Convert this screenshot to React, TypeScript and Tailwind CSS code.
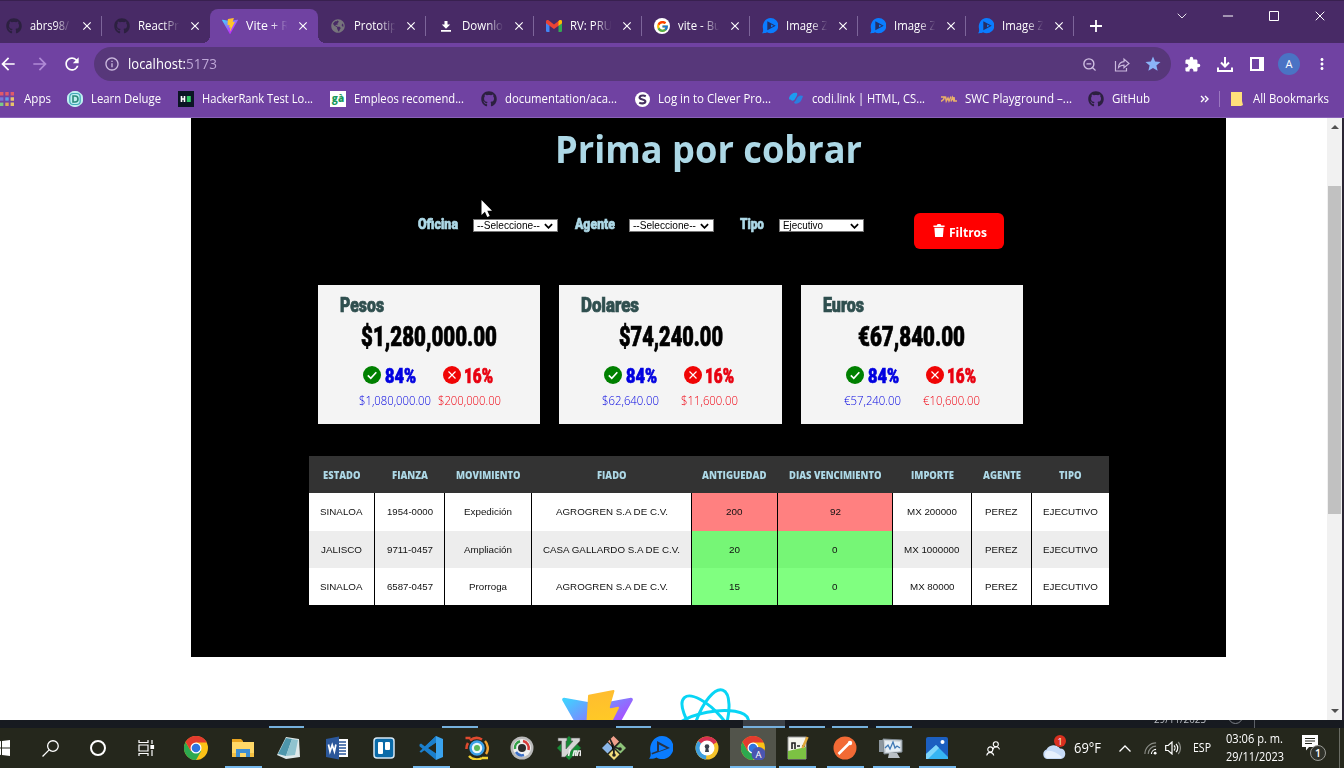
import { useLayoutEffect, useRef, useState } from "react";
import type { ReactNode } from "react";
import { FaGithub, FaGlobeAmericas } from "react-icons/fa";
import { FcGoogle } from "react-icons/fc";
import { MdArrowBack, MdArrowForward, MdRefresh, MdInfoOutline, MdStar, MdClose, MdAdd, MdMoreVert, MdExtension } from "react-icons/md";
import { ChevronDown, ChevronUp, Minus, Square, X, ZoomOut } from "lucide-react";

const UI = "font-['Open_Sans','Noto_Sans',sans-serif]";
const HEAVY = "font-['Roboto',sans-serif] font-black [-webkit-text-stroke:0.7px_currentColor]";

/* One line of text condensed or widened to an exact advance width. */
function Fit({ w, className = "", children }: { w: number; className?: string; children: ReactNode }) {
  const ref = useRef<HTMLSpanElement>(null);
  const [k, setK] = useState(1);
  useLayoutEffect(() => {
    if (ref.current) setK(w / ref.current.getBoundingClientRect().width);
  }, [w]);
  return (
    <span className={`block shrink-0 whitespace-nowrap ${className}`} style={{ width: w }}>
      <span ref={ref} className="inline-block origin-left whitespace-pre" style={{ transform: `scaleX(${k})` }}>
        {children}
      </span>
    </span>
  );
}

function ViteLogo({ className }: { className: string }) {
  return (
    <svg viewBox="0 0 256 257" className={className}>
      <defs>
        <linearGradient id="va" x1="-.8%" x2="57.6%" y1="7.7%" y2="78.4%">
          <stop offset="0%" stopColor="#41D1FF" />
          <stop offset="100%" stopColor="#BD34FE" />
        </linearGradient>
        <linearGradient id="vb" x1="43.4%" x2="50.3%" y1="2.2%" y2="89%">
          <stop offset="0%" stopColor="#FFBD2F" />
          <stop offset="100%" stopColor="#FFD21F" />
        </linearGradient>
      </defs>
      <path fill="url(#va)" d="M255.153 37.938L134.897 252.976c-2.483 4.44-8.862 4.466-11.382.048L.875 37.958c-2.746-4.814 1.371-10.646 6.827-9.67l120.385 21.517a6.537 6.537 0 0 0 2.322-.004l117.867-21.483c5.438-.991 9.574 4.796 6.877 9.62Z" />
      <path fill="url(#vb)" d="M185.432.063L96.44 17.501a3.268 3.268 0 0 0-2.634 3.014l-5.474 92.456a3.268 3.268 0 0 0 3.997 3.378l24.777-5.718c2.318-.535 4.413 1.507 3.936 3.838l-7.361 36.047c-.495 2.426 1.782 4.5 4.151 3.78l15.304-4.649c2.372-.72 4.652 1.36 4.15 3.788l-11.698 56.621c-.732 3.542 3.979 5.473 5.943 2.437l1.313-2.028l72.516-144.72c1.215-2.423-.88-5.186-3.54-4.672l-25.505 4.922c-2.396.462-4.435-1.77-3.759-4.114l16.646-57.705c.677-2.35-1.37-4.583-3.769-4.113Z" />
    </svg>
  );
}

function PlayLogo({ className }: { className: string }) {
  return (
    <svg viewBox="0 0 24 24" className={className}>
      <path fill="#0a7cff" d="M13 0a11 11 0 1 1 0 23c-2 0-4-.6-5.500-1.600C6 22.500 3 23 0 22.700c1.500-1.500 2-3.500 1.500-6.500C.6 12.500 1.500 8 3.500 5.200 5.500 2 9 0 13 0z" />
      <path fill="#252f66" d="M8 5l12.500 6.700L8 18.500z" />
      <path fill="#0a7cff" d="M13.500 9.700l4 2.100-4 2.200z" />
    </svg>
  );
}

function Gmail() {
  return (
    <svg viewBox="0 0 16 12" className="h-[12px] w-[16px]">
      <path fill="#4285f4" d="M0 2h3.500v10H1.200A1.200 1.200 0 0 1 0 10.800z" />
      <path fill="#34a853" d="M12.500 2H16v8.800a1.200 1.200 0 0 1-1.200 1.200h-2.300z" />
      <path fill="#ea4335" d="M0 1.500C0 0 1.800-.4 2.800.5L8 4.500 13.200.5c1-.9 2.800-.5 2.800 1v1.700L8 9 0 3.200z" />
      <path fill="#fbbc04" d="M12.500 1l.7-.5c1-.9 2.800-.5 2.800 1v1.700l-3.500 2.600z" />
    </svg>
  );
}

function DownloadGlyph({ className }: { className: string }) {
  return (
    <svg viewBox="0 0 16 16" className={className} fill="none" stroke="white" strokeWidth="2">
      <path d="M8 1v9M4 6.500l4 4 4-4M1 11.500V15h14v-3.500" />
    </svg>
  );
}

type TabData = { icon: ReactNode; text: string; w: number; active?: boolean; line?: boolean };
const octo = <FaGithub className="size-4 text-[#2c2040]" />;
const tabs: TabData[] = [
  { icon: octo, text: "abrs98/", w: 39, line: true },
  { icon: octo, text: "ReactPr", w: 41 },
  { icon: <ViteLogo className="size-4" />, text: "Vite + R", w: 43, active: true },
  { icon: <FaGlobeAmericas className="size-[14px] text-[#77747c]" />, text: "Prototip", w: 43, line: true },
  { icon: <svg viewBox="0 0 16 16" className="size-4"><path fill="#fff" d="M6.500 3h3v3.500h2.700L8 10.700 3.800 6.500h2.700zM3 12h10v1.700H3z" /></svg>, text: "Downlo", w: 41, line: true },
  { icon: <Gmail />, text: "RV: PRU", w: 42, line: true },
  { icon: <span className="flex size-4 items-center justify-center rounded-full bg-white"><FcGoogle className="size-[13px]" /></span>, text: "vite - Bu", w: 43, line: true },
  { icon: <PlayLogo className="size-4" />, text: "Image Z", w: 42, line: true },
  { icon: <PlayLogo className="size-4" />, text: "Image Z", w: 42, line: true },
  { icon: <PlayLogo className="size-4" />, text: "Image Z", w: 42, line: true },
];

function TabStrip() {
  return (
    <div className="flex h-[43px] shrink-0 border-t border-[#38204f] bg-[#482a66]">
      <div className="-ml-[6px] flex">
        {tabs.map((t, i) => (
          <div key={i} className={`relative mt-2 flex h-[34px] w-[108px] items-center rounded-t-lg pl-[12px] ${t.active ? "bg-[#7042a2]" : ""}`}>
            {t.active && (
              <>
                <span className="absolute bottom-0 -left-2 size-2 bg-[radial-gradient(circle_at_0_0,transparent_8px,#7042a2_8px)]" />
                <span className="absolute -right-2 bottom-0 size-2 bg-[radial-gradient(circle_at_100%_0,transparent_8px,#7042a2_8px)]" />
              </>
            )}
            <span className="flex w-4 justify-center">{t.icon}</span>
            <div className="ml-[8px] w-[45px] [mask-image:linear-gradient(to_right,black_55%,transparent_92%)]">
              <Fit w={t.w} className="text-[12px] leading-5 font-medium text-white">{t.text}</Fit>
            </div>
            <MdClose className="ml-[5px] size-[14px] text-white" />
            {t.line && <span className="absolute top-[7px] right-0 h-5 w-px bg-[#7d659a]" />}
          </div>
        ))}
      </div>
      <svg viewBox="0 0 12 12" className="mt-[19px] ml-[16px] size-[12px]" stroke="#fff" strokeWidth="1.800"><path d="M6 0v12M0 6h12" /></svg>
      <div className="mr-[16px] ml-auto flex items-start gap-[30px] pt-[7px] text-white">
        <ChevronDown className="size-4" strokeWidth={1.300} />
        <Minus className="size-4" strokeWidth={1.500} />
        <svg viewBox="0 0 12 12" className="mx-[2px] mt-[2px] size-[12px]" fill="none" stroke="#fff"><path d="M1.500 1.500h9v9h-9z" /></svg>
        <X className="size-4" strokeWidth={1.500} />
      </div>
    </div>
  );
}

function Toolbar() {
  return (
    <div className="flex h-[42px] shrink-0 items-center bg-[#7042a2] text-white">
      <MdArrowBack className="-ml-[2px] size-5" />
      <MdArrowForward className="ml-[12px] size-5 text-[#b08ad6]" />
      <MdRefresh className="ml-[12px] size-5" />
      <div className="ml-[12px] flex h-[34px] w-[1077px] items-center rounded-full bg-[#57377a] pl-[10px]">
        <MdInfoOutline className="size-4 text-[#cbb9de]" />
        <Fit w={58} className="ml-[8px] text-[14px] leading-5">localhost:</Fit>
        <Fit w={31} className="text-[14px] leading-5 text-[#bda6d6]">5173</Fit>
        <div className="mr-[9px] ml-auto flex items-center">
          <ZoomOut className="size-[15px] text-[#d0c0e2]" strokeWidth={2.200} />
          <svg viewBox="0 0 16 16" className="ml-[17px] size-[16px]" fill="none" stroke="#cbb9de" strokeWidth="1.200">
            <path d="M1.500 5v10h11v-3M4.500 11.500c.3-4 2-5.700 5.500-5.900V3l5 4.500-5 4.300V9.200c-2.500 0-4.300.8-5.500 2.300z" />
          </svg>
          <MdStar className="ml-[14px] size-[18px] text-[#8ab4f8]" />
        </div>
      </div>
      <MdExtension className="ml-[13px] size-[17px]" />
      <DownloadGlyph className="ml-[16px] size-[16px]" />
      <svg viewBox="0 0 14 14" className="ml-[17px] size-[14px]"><path fill="none" stroke="#fff" strokeWidth="2" d="M1 1h12v12H1z" /><path fill="#fff" d="M9 0h5v14H9z" /></svg>
      <span className="ml-[14px] flex size-[22px] items-center justify-center rounded-full bg-[#4a73c4] text-[11px]">A</span>
      <MdMoreVert className="ml-[13px] size-[18px]" />
    </div>
  );
}

type Mark = { icon: ReactNode; text: string; w: number; gap: string; pad: string };
const marks: Mark[] = [
  {
    icon: (
      <svg viewBox="0 0 14 14" className="h-[14px] w-[14px]">
        <path fill="#e05a6a" d="M0 0h3.400v3.400H0zM5.300 0h3.400v3.400H5.300zM10.600 0H14v3.400h-3.400z" />
        <path fill="#7c74d8" d="M0 5.300h3.400v3.400H0z" /><path fill="#5f9be8" d="M5.300 5.300h3.400v3.400H5.300z" /><path fill="#e8c46a" d="M10.600 5.300H14v3.400h-3.400zM10.600 10.600H14V14h-3.400z" />
        <path fill="#7ac98a" d="M0 10.600h3.400V14H0z" /><path fill="#e0a55a" d="M5.300 10.600h3.400V14H5.300z" />
      </svg>
    ), text: "Apps", w: 27, gap: "", pad: "ml-[10px]",
  },
  {
    icon: (
      <svg viewBox="0 0 16 16" className="size-4"><rect x="0" y="1.500" width="16" height="13" rx="5" fill="#bfeef0" /><rect x="2" y="0" width="12" height="16" rx="5" fill="#bfeef0" /><rect x="2.800" y="2.500" width="10.400" height="11" rx="3.500" fill="none" stroke="#3fa9b8" strokeWidth="1.200" /><path d="M6 5h2a3 3 0 0 1 0 6H6z" fill="none" stroke="#2a8b7a" strokeWidth="1.600" /></svg>
    ), text: "Learn Deluge", w: 70, gap: "ml-[16px]", pad: "ml-[8px]",
  },
  {
    icon: <svg viewBox="0 0 16 16" className="size-4"><path fill="#0b1524" d="M0 0h16v16H0z" /><path stroke="#fff" strokeWidth="1.600" d="M3.500 5v6M6.500 5v6M3.500 8h3" /><path fill="#2ec866" d="M8.800 5h4v6h-4z" /></svg>,
    text: "HackerRank Test Lo...", w: 111, gap: "ml-[17px]", pad: "ml-[8px]",
  },
  {
    icon: <span className="flex size-4 items-center justify-center bg-white pb-[2px] text-[10px] leading-none font-extrabold text-[#1a9a5c]">gà</span>,
    text: "Empleos recomend...", w: 110, gap: "ml-[17px]", pad: "ml-[8px]",
  },
  { icon: octo, text: "documentation/aca...", w: 112, gap: "ml-[17px]", pad: "ml-[8px]" },
  {
    icon: <svg viewBox="0 0 16 16" className="size-[15px]"><circle cx="8" cy="8" r="8" fill="#fff" /><path fill="none" stroke="#453060" strokeWidth="2.300" d="M11.500 4.500C8 2.800 4 4.500 5 6.500s5.500 1 6 3.200-3.500 3.300-6.500 1.600" /></svg>,
    text: "Log in to Clever Pro...", w: 113, gap: "ml-[18px]", pad: "ml-[8px]",
  },
  {
    icon: <svg viewBox="0 0 16 16" className="size-4"><path fill="#1c9cf0" d="M1 7c1-4 5-6 8-5 1 2-1 4-2 6s-3 2-4 1-2 0-2-2z" /><path fill="#2a7fe0" d="M8 9c2-5 5-5 7-4-1 3-2 6-4.500 7S7 13 6 11.500z" /></svg>,
    text: "codi.link | HTML, CS...", w: 113, gap: "ml-[17px]", pad: "ml-[8px]",
  },
  {
    icon: <svg viewBox="0 0 16 16" className="size-4"><path fill="none" stroke="#e9b06a" strokeWidth="1.500" d="M0 6h3.500l-1 2.500L0 10.500M4.500 5.500l.8 4.500 1.700-3 1 3 2-4.500M10 10.500l1.500-4 1.500 4M13 6l.5 4H16" /></svg>,
    text: "SWC Playground –...", w: 107, gap: "ml-[16px]", pad: "ml-[8px]",
  },
  { icon: octo, text: "GitHub", w: 38, gap: "ml-[16px]", pad: "ml-[8px]" },
];

function Bookmarks() {
  return (
    <div className="flex h-[33px] shrink-0 items-center border-b border-[#8a62b8] bg-[#7042a2] pb-[4px] text-[12px] leading-5 text-white">
      {marks.map((m, i) => (
        <div key={i} className={`flex items-center ${m.gap}`}>
          {m.icon}
          <Fit w={m.w} className={m.pad}>{m.text}</Fit>
        </div>
      ))}
      <svg viewBox="0 0 9 8" className="ml-auto h-[8px] w-[9px]" fill="none" stroke="#fff" strokeWidth="1.400"><path d="M1 1l3 3-3 3M5 1l3 3-3 3" /></svg>
      <span className="ml-[10px] h-4 w-px bg-[#9b78c0]" />
      <svg viewBox="0 0 12 14" className="ml-[11px] h-[14px] w-[12px]"><path fill="#ffe07a" d="M0 0h11v9l1 4-2 1H0z" /></svg>
      <Fit w={76} className="mr-[15px] ml-[10px]">All Bookmarks</Fit>
    </div>
  );
}

function Select({ value, w, className }: { value: string; w: number; className: string }) {
  return (
    <div className={`mt-[6px] flex h-[13px] w-[85px] items-center border border-[#767676] bg-white pl-[3px] ${className}`}>
      <Fit w={w} className="font-['Liberation_Sans',sans-serif] text-[10px] leading-[12px] text-black">{value}</Fit>
      <svg viewBox="0 0 10 6" className="mr-[4px] ml-auto h-[6px] w-[9px]" fill="none" stroke="#000" strokeWidth="2"><path d="M1 1l4 4 4-4" /></svg>
    </div>
  );
}

function FilterLabel({ w, className, children }: { w: number; className: string; children: string }) {
  return <Fit w={w} className={`${HEAVY} text-[15.500px] leading-[22px] text-[#add8e6] ${className}`}>{children}</Fit>;
}

function Filters() {
  return (
    <div className="flex h-[109px] items-start pt-[37px] pl-[227px]">
      <FilterLabel w={40} className="">Oficina</FilterLabel>
      <Select value="--Seleccione--" w={63} className="ml-[15px]" />
      <FilterLabel w={40} className="ml-[17px]">Agente</FilterLabel>
      <Select value="--Seleccione--" w={63} className="ml-[14px]" />
      <FilterLabel w={24} className="ml-[26px]">Tipo</FilterLabel>
      <Select value="Ejecutivo" w={40} className="ml-[15px]" />
      <div className="ml-[50px] flex h-[36px] w-[90px] items-center rounded-[6px] bg-[#ff0000] pl-[19px] text-white">
        <svg viewBox="0 0 12 14" className="mb-[2px] h-[13px] w-[12px]" fill="#fff"><path d="M0 1.500h3.500L4.500 0h3l1 1.500H12v1.700H0zM1 4h10l-.8 10H1.800z" /></svg>
        <Fit w={38} className="ml-[4px] pt-px text-[13px] leading-5 font-bold">Filtros</Fit>
      </div>
    </div>
  );
}

type CardData = { name: string; nameW: number; total: string; totalW: number; ok: string; okW: number; bad: string; badW: number; pad: string; gap: string };
const cards: CardData[] = [
  { name: "Pesos", nameW: 44, total: "$1,280,000.00", totalW: 136, ok: "$1,080,000.00", okW: 72, bad: "$200,000.00", badW: 63, pad: "pl-[41px]", gap: "ml-[7px]" },
  { name: "Dolares", nameW: 58, total: "$74,240.00", totalW: 104, ok: "$62,640.00", okW: 57, bad: "$11,600.00", badW: 57, pad: "pl-[43px]", gap: "ml-[22px]" },
  { name: "Euros", nameW: 41, total: "€67,840.00", totalW: 107, ok: "€57,240.00", okW: 57, bad: "€10,600.00", badW: 57, pad: "pl-[43px]", gap: "ml-[22px]" },
];

function Badge({ ok }: { ok: boolean }) {
  return (
    <svg viewBox="0 0 18 18" className="-mt-[5px] size-[18px]">
      <circle cx="9" cy="9" r="9" fill={ok ? "#008000" : "#f00505"} />
      <path d={ok ? "M4.800 9.300l3 3 5.500-6" : "M5.500 5.500l7 7M12.500 5.500l-7 7"} fill="none" stroke="#fff" strokeWidth={ok ? 1.700 : 1.200} />
    </svg>
  );
}

function Card({ c }: { c: CardData }) {
  return (
    <div className="h-[139px] w-[222.400px] bg-[#f4f4f4]">
      <Fit w={c.nameW} className={`${HEAVY} ml-[22px] pt-[8px] text-[20px] leading-[24px] text-[#2f4f4f]`}>{c.name}</Fit>
      <div className="flex h-[40px] items-center justify-center">
        <Fit w={c.totalW} className={`${HEAVY} text-[27px] leading-[32px] text-black`}>{c.total}</Fit>
      </div>
      <div className="mt-[8px] flex h-[24px] items-center pl-[45px]">
        <Badge ok />
        <Fit w={31} className={`${HEAVY} ml-[4px] text-[19.500px] leading-6 text-[#0000e0]`}>84%</Fit>
        <span className="w-[27px]" />
        <Badge ok={false} />
        <Fit w={29} className={`${HEAVY} ml-[3px] text-[19.500px] leading-6 text-[#e80010]`}>16%</Fit>
      </div>
      <div className={`mt-[2px] flex text-[12.500px] leading-[20px] font-[350] ${c.pad}`}>
        <Fit w={c.okW} className="text-[#0000e0]">{c.ok}</Fit>
        <Fit w={c.badW} className={`text-[#f00010] ${c.gap}`}>{c.bad}</Fit>
      </div>
    </div>
  );
}

const cols = "grid grid-cols-[66px_70px_87px_160px_86px_115px_79px_60px_77px]";
const heads: [string, number][] = [["ESTADO", 37.500], ["FIANZA", 36], ["MOVIMIENTO", 64.500], ["FIADO", 29.500], ["ANTIGUEDAD", 64.500], ["DIAS VENCIMIENTO", 92.500], ["IMPORTE", 43], ["AGENTE", 38], ["TIPO", 22.500]];
const rows: [string, number][][] = [
  [["SINALOA", 42.500], ["1954-0000", 46], ["Expedición", 48], ["AGROGREN S.A DE C.V.", 112], ["200", 16.500], ["92", 11], ["MX 200000", 50], ["PEREZ", 32.500], ["EJECUTIVO", 55]],
  [["JALISCO", 41], ["9711-0457", 46], ["Ampliación", 48], ["CASA GALLARDO S.A DE C.V.", 137], ["20", 11], ["0", 5.500], ["MX 1000000", 55.500], ["PEREZ", 32.500], ["EJECUTIVO", 55]],
  [["SINALOA", 42.500], ["6587-0457", 46], ["Prorroga", 38], ["AGROGREN S.A DE C.V.", 112], ["15", 11], ["0", 5.500], ["MX 80000", 44.500], ["PEREZ", 32.500], ["EJECUTIVO", 55]],
];
const rowBg = ["h-[38px] bg-white", "h-[37px] bg-[#ededed]", "h-[37px] bg-white"];
const flagBg = ["bg-[#ff8080]", "bg-[#76f676]", "bg-[#80ff80]"];

function Table() {
  return (
    <div className="mt-[32px] ml-[118px] w-[800px]">
      <div className={`${cols} h-[37px] bg-[#333333] text-[9.600px] leading-4 font-extrabold text-[#add8e6]`}>
        {heads.map(([t, w]) => (
          <div key={t} className="flex items-center justify-center pt-[2px] pr-px"><Fit w={w}>{t}</Fit></div>
        ))}
      </div>
      {rows.map((r, i) => (
        <div key={i} className={`${cols} ${rowBg[i]} font-['Liberation_Sans',sans-serif] text-[9.600px] leading-4 text-[#111]`}>
          {r.map(([t, w], j) => (
            <div key={j} className={`flex items-center justify-center ${j < 8 ? "border-r border-black" : ""} ${j === 4 || j === 5 ? flagBg[i] : ""}`}>
              <Fit w={w}>{t}</Fit>
            </div>
          ))}
        </div>
      ))}
    </div>
  );
}

function ReactLogo() {
  return (
    <svg viewBox="-42 -42 84 84" className="-mt-[5px] size-[84px]" fill="none" stroke="#08d5f5" strokeWidth="3">
      <g transform="rotate(-11)">
        <ellipse rx="39" ry="15" />
        <ellipse rx="39" ry="15" transform="rotate(60)" />
        <ellipse rx="39" ry="15" transform="rotate(120)" />
      </g>
      <circle r="7.500" fill="#08d5f5" stroke="none" />
    </svg>
  );
}

function Page() {
  return (
    <div className="flex h-[602px] shrink-0 overflow-hidden bg-white">
      <div className="relative w-[1327px] pl-[191px]">
        <main className="h-[539px] w-[1035px] bg-black">
          <h1 className="flex h-[58px] items-center justify-center pt-[2px] text-[38px] leading-[58px] font-bold text-[#add8e6]">
            <Fit w={307}>Prima por cobrar</Fit>
          </h1>
          <Filters />
          <div className="flex gap-[19px] pl-[127px]">
            {cards.map((c) => <Card key={c.name} c={c} />)}
          </div>
          <Table />
        </main>
        <div className="flex h-[63px] items-start overflow-hidden pt-[33px] pl-[371px]">
          <ViteLogo className="size-[71px] shrink-0" />
          <div className="ml-[35px] shrink-0"><ReactLogo /></div>
        </div>
        <svg viewBox="0 0 12 19" className="absolute top-[82px] left-[481px] h-[19px] w-[12px]"><path fill="#fff" d="M.5 0v15l3.400-3.200L6.300 17l2.400-1-2.400-5.200H11z" /></svg>
      </div>
      <div className="flex w-[15px] flex-col items-center bg-[#f1f1f1] py-[7px]">
        <svg viewBox="0 0 8 4" className="h-[4px] w-[8px]"><path fill="#505050" d="M0 4l4-4 4 4z" /></svg>
        <div className="mt-[57px] h-[328px] w-[13px] bg-[#c1c1c1]" />
        <svg viewBox="0 0 8 4" className="mt-auto h-[4px] w-[8px]"><path fill="#505050" d="M0 0l4 4 4-4z" /></svg>
      </div>
      <div className="w-[2px] bg-[#2a2433]" />
    </div>
  );
}

function Chrome() {
  return (
    <>
      <circle cx="12" cy="12" r="12" fill="#fbc116" />
      <path fill="#2da94f" d="M1.600 6A12 12 0 0 0 12 24l5.200-9L12 12 6.800 15z" />
      <path fill="#e33b2e" d="M12 6.500h10.700A12 12 0 0 0 1.600 6l5.200 9z" />
      <circle cx="12" cy="12" r="5.500" fill="#fff" />
      <circle cx="12" cy="12" r="4.300" fill="#2f74e0" />
    </>
  );
}

type AppData = { art: ReactNode; shift: string; mark?: boolean; active?: boolean };
const apps: AppData[] = [
  { shift: "", mark: true, art: <><path fill="#e8a420" d="M1 3h9l2 2v4H1z" /><path fill="#ffd867" d="M1 6h22v15H1z" /><path fill="#3f8fd2" d="M5 21v-8h14v8h-4v-4H9v4z" /><path fill="#f4c041" d="M1 17h4v4H1zM19 17h4v4h-4z" /></> },
  { shift: "", art: <><path fill="#dfe9ea" d="M9 1l13 2 1 18-14 2-9-4z" /><path fill="#4d96ab" d="M9 2l6 1-6 17-8-2z" /><path fill="#8fc3cf" d="M15 3l6 1-3 15-9 1z" /></> },
  { shift: "ml-0.5", art: <><path fill="#fff" d="M12 3h11v18H12z" /><path stroke="#2b579a" strokeWidth="1.500" d="M14 6h7M14 9h7M14 12h7M14 15h7M14 18h7" /><path fill="#2b579a" d="M1 3l13-2.500v23L1 21z" /><path fill="none" stroke="#fff" strokeWidth="1.700" d="M3.500 8.500l1.500 7 2.200-6.500 2.200 6.500 1.500-7" /></> },
  { shift: "ml-px", art: <><rect x="2" y="2" width="20" height="20" rx="3" fill="#0a6aa8" stroke="#d8e8f4" strokeWidth="1.500" /><rect x="6" y="6" width="5" height="12" rx="1" fill="#fff" /><rect x="13" y="6" width="5" height="8" rx="1" fill="#fff" /></> },
  { shift: "ml-px", mark: true, art: <><path fill="#1b7fcc" d="M17 0L6 10.500 2 7.500.5 8.500v1.700L17 24l1-6-9-6 9-6z" /><path fill="#1b7fcc" d="M.5 15.500L2 16.700 17 6V0z" /><path fill="#3aa3ee" d="M17 0l7 3v18l-7 3z" /></> },
  { shift: "", art: <><circle cx="12" cy="12" r="6.500" fill="#eaf6fb" stroke="#3aa0e8" strokeWidth="2.500" /><circle cx="12" cy="12" r="3" fill="#5bb85b" /><path fill="none" stroke="#e04a2f" strokeWidth="2.500" d="M5 4.500a10.500 10.500 0 0 1 12-1M1.500 13A10 10 0 0 1 3 7M.5 2h5" /><path fill="none" stroke="#f2a230" strokeWidth="2.500" d="M20 5a10.500 10.500 0 0 1 1 13" /><path fill="none" stroke="#f2d230" strokeWidth="2.500" d="M4 20a10.500 10.500 0 0 0 13 2M17 22h6" /></> },
  { shift: "-ml-px", art: <><circle cx="12" cy="12" r="11.500" fill="#b9b9b9" /><circle cx="12" cy="12" r="9" fill="#efefef" /><path fill="none" stroke="#3c70c8" strokeWidth="2.500" d="M6 16a7 7 0 0 0 8 3" /><path fill="none" stroke="#2f9e44" strokeWidth="2.500" d="M5 13a7 7 0 0 1 5-7.700" /><path fill="none" stroke="#d83a3a" strokeWidth="2.500" d="M13 5.100A7 7 0 0 1 18.500 14" /><circle cx="12" cy="12" r="4" fill="#2c2c2c" /></> },
  { shift: "ml-px", art: <><path fill="#168a35" d="M12 0l12 12-12 12L0 12z" /><path fill="#d5d5d5" stroke="#555" strokeWidth=".6" d="M1 2h9v3H9v8l7-8h-2V2h9v3L8 21H4.500V5H1z" /><path fill="none" stroke="#eee" strokeWidth="1.600" d="M13 13l-1.500 7M16 20l1.300-5h2l-1 5M20 20l1.300-5H24l-1 5" /></> },
  { shift: "-ml-px", mark: true, art: <><path fill="#f0a08c" d="M11.500 0l5.500 5.500-5.500 5.500L6 5.500z" /><path fill="#8bb6e8" d="M5.500 6.500L11 12l-5.500 5.500L0 12z" /><path fill="#8ec47a" d="M18.500 6.500L24 12l-5.500 5.500L13 12z" /><path fill="#f2dc7a" d="M12 13l5.500 5.500L12 24l-5.500-5.500z" /><path stroke="#222" strokeWidth="1.600" d="M8 3l4 8v9M12 11l6 2" /><circle cx="12" cy="19" r="1.800" fill="#222" /><circle cx="18" cy="13" r="1.800" fill="#222" /></> },
  { shift: "ml-px", art: <><path fill="#0a7cff" d="M13 0a11 11 0 1 1 0 23c-2 0-4-.6-5.500-1.600C6 22.500 3 23 0 22.700c1.500-1.500 2-3.500 1.500-6.500C.6 12.500 1.500 8 3.500 5.200 5.500 2 9 0 13 0z" /><path fill="#263347" d="M8 5l13 7L3 18.500l-.5-1.500L8 15z" /><path fill="#0a7cff" d="M10 8.500l7.500 3.800-7.500 3z" /></> },
  { shift: "", art: <><circle cx="12" cy="12" r="11.500" fill="#f4c22a" /><path fill="#d83050" d="M12 12L3 5a11.500 11.500 0 0 1 19 1z" /><path fill="#3e9fe0" d="M12 12L3 5a11.500 11.500 0 0 0 8 18.500z" /><circle cx="12" cy="12" r="7.500" fill="#fff" /><circle cx="12" cy="10.500" r="2.300" fill="#39414e" /><path fill="#39414e" d="M11 11h2l1 5h-4z" /></> },
  { shift: "", mark: true, active: true, art: <><Chrome /><circle cx="17.500" cy="18" r="7" fill="#4a55b0" /><text x="17.500" y="21.500" textAnchor="middle" fontSize="9.500" fill="#fff">A</text></> },
  { shift: "-ml-0.5", mark: true, art: <><path fill="#f5f5ee" stroke="#999" d="M3 1h18v22H3z" /><path fill="#7cc243" d="M3 15l18-4v12H3z" /><path fill="none" stroke="#222" strokeWidth="1.600" d="M7 13V7h3v6M12 10h3M17 10h3" /><path stroke="#e0a83a" strokeWidth="2.500" d="M22.500 1l-5 11" /></> },
  { shift: "ml-0.5", mark: true, art: <><circle cx="12" cy="12" r="11.500" fill="#f26a35" /><path stroke="#fff" strokeWidth="2.500" d="M5.500 18l6-6M11 12.500l5-5" /><circle cx="17" cy="7" r="2.200" fill="#fff" /></> },
  { shift: "", mark: true, art: <><path fill="#8d979f" d="M0 4h9v12H0z" /><path fill="#cfd6db" stroke="#7f8a92" d="M4 3l19 1v12L5 18z" /><path fill="#e7eff5" d="M6 5l15 1v9L7 16z" /><path fill="none" stroke="#3f79b5" strokeWidth="1.300" d="M6 12l3-3 2 4 3-7 2 6 2-2 3 2" /><path fill="#b9c0c5" d="M10 17h8l3 5H9z" /></> },
  { shift: "", mark: true, art: <><rect x="1" y="1" width="22" height="22" rx="2" fill="#1c5fc0" /><path fill="#36b5f2" d="M1 18l10-9 12 12v2H1z" /><path fill="#7fd5fa" d="M1 18l10-9 3 3L3 23H1z" /><circle cx="17.500" cy="6" r="2" fill="#fff" /></> },
];

function Taskbar() {
  return (
    <div className="flex h-[48px] shrink-0 flex-col bg-[#25271c] text-white">
      <div className="flex h-[8px] shrink-0 items-end overflow-hidden bg-[#171a20]">
        <span className="ml-[269px] h-[2px] w-[35px] bg-[#76b0de]" />
        <span className="ml-[138px] h-[2px] w-[36px] bg-[#76b0de]" />
        <span className="ml-[138px] h-[2px] w-[35px] bg-[#76b0de]" />
        <span className="ml-[92px] h-[8px] w-[42px] border-b-2 border-[#76b0de] bg-[#3c4148]" />
        <span className="ml-[4px] h-[2px] w-[36px] bg-[#76b0de]" />
        <span className="ml-[7px] h-[2px] w-[36px] bg-[#76b0de]" />
        <span className="ml-[8px] h-[2px] w-[36px] bg-[#76b0de]" />
        <div className="ml-[242px] h-[8px] overflow-hidden"><Fit w={52} className="-mt-[8px] text-[10.500px] leading-[14px] text-[#b8bcc2]">29/11/2023</Fit></div>
        <div className="ml-[22px] h-[8px] overflow-hidden"><span className="-mt-[11px] block size-[15px] rounded-full border border-[#7d8188]" /></div>
        <span className="ml-[11px] h-[8px] w-px bg-[#5d6168]" />
      </div>
      <div className="flex h-[40px] items-center">
        <svg viewBox="0 0 10 16" className="h-[16px] w-[10px]" fill="#fff"><path d="M0 1.300L1 1v6.500H0zM2 1l8-1v7.500H2zM0 8.500h1V15l-1-.3zM2 8.500h8V16l-8-1z" /></svg>
        <svg viewBox="0 0 16 16" className="ml-[32px] size-[17px]" fill="none" stroke="#fff" strokeWidth="1.200"><circle cx="10.300" cy="5.700" r="5" /><path d="M6.700 9.300L.5 15.500" /></svg>
        <span className="ml-[31px] size-[16px] rounded-full border-[2.500px] border-white" />
        <svg viewBox="0 0 17 16" className="ml-[32px] h-[16px] w-[17px]" fill="none" stroke="#fff" strokeWidth="1.200"><path d="M1 0v2.500h9V0M1 16v-2.500h9V16M1 5h9v6H1zM14 0v4M14 10v6" /><path fill="#fff" d="M13 5.500h2.500v3H13z" /></svg>
        <svg viewBox="0 0 24 24" className="mr-[12px] ml-[29px] size-[24px]"><Chrome /></svg>
        {apps.map((a, i) => (
          <div key={i} className={`flex h-[40px] w-[46px] shrink-0 flex-col items-center ${a.shift} ${a.active ? "bg-[#52544b]" : ""}`}>
            <svg viewBox="0 0 24 24" className="mt-[8px] size-[24px]">{a.art}</svg>
            {a.mark && <span className={`mt-auto h-[2px] bg-[#76b9ed] ${a.active ? "w-full" : "w-[37px]"}`} />}
          </div>
        ))}
        <svg viewBox="0 0 15 16" className="ml-[26px] h-[15px] w-[14px]" fill="none" stroke="#fff" strokeWidth="1.200"><circle cx="10.500" cy="3.500" r="2.700" /><path d="M7.500 9c1-4 6-3.500 7 0M.8 15.500c.7-4.500 6.500-4.500 7.500 0" /><circle cx="4.600" cy="9" r="2.700" /></svg>
        <div className="relative ml-[42px] h-[24px] w-[24px]">
          <svg viewBox="0 0 24 24" className="size-full"><path fill="#c7dbf7" d="M5 23a5 5 0 0 1-.5-9.500A8 8 0 0 1 18 12.500a5.300 5.300 0 0 1 1 10.500z" /><path fill="#e7f0fc" d="M5 22a4 4 0 0 1 0-7c5-1 10 2 15 6l-1 1z" /></svg>
          <span className="absolute -top-px right-0 flex size-[12px] items-center justify-center rounded-full bg-[#d9301f] text-[9px] leading-none">1</span>
        </div>
        <Fit w={27} className="ml-[8px] text-[14px] leading-5">69°F</Fit>
        <svg viewBox="0 0 12 7" className="ml-[18px] h-[7px] w-[12px]" fill="none" stroke="#fff" strokeWidth="1.300"><path d="M.5 6.500L6 1l5.500 5.500" /></svg>
        <svg viewBox="0 0 14 14" className="ml-[13px] size-[13px]" fill="none" stroke="#8a8c86" strokeWidth="1.200"><path d="M1 13A12 12 0 0 1 13 1M4.500 13A8.500 8.500 0 0 1 13 4.500" /><path stroke="#fff" d="M8 13a5 5 0 0 1 5-5" /><circle cx="12" cy="12" r="1.500" fill="#fff" stroke="none" /></svg>
        <svg viewBox="0 0 16 14" className="ml-[8px] h-[14px] w-[16px]" fill="none" stroke="#fff" strokeWidth="1.200"><path d="M.7 4.500h2.500L7 1v12L3.200 9.500H.7zM9 4.500c1.300 1.300 1.300 3.700 0 5M11 2.800c2.300 2.300 2.300 6.100 0 8.400" /><path stroke="#8a8c86" d="M13.200 1c3 3.300 3 8.700 0 12" /></svg>
        <Fit w={18} className="ml-[12px] text-[12px] leading-5">ESP</Fit>
        <div className="-mt-px ml-[15px] flex w-[58px] flex-col text-[12px] leading-[18px]">
          <Fit w={57}>03:06 p. m.</Fit>
          <Fit w={58}>29/11/2023</Fit>
        </div>
        <div className="relative ml-[18px] h-[26px] w-[24px]">
          <svg viewBox="0 0 16 16" className="size-[16px]"><path fill="#fff" d="M0 0h16v12H7l-3 3.500V12H0z" /><path stroke="#25271c" strokeWidth="1.200" d="M3 3.500h10M3 6h10M3 8.500h7" /></svg>
          <span className="absolute right-0 bottom-0 flex size-[16px] items-center justify-center rounded-full border border-[#9a9b96] bg-[#30322a] text-[10.500px] leading-none font-semibold">1</span>
        </div>
        <span className="mr-[4px] ml-auto h-[40px] w-px bg-[#6a6c64]" />
      </div>
    </div>
  );
}

export default function App() {
  return (
    <div className={`flex h-[768px] w-[1344px] flex-col overflow-hidden bg-white ${UI}`}>
      <TabStrip />
      <Toolbar />
      <Bookmarks />
      <Page />
      <Taskbar />
    </div>
  );
}
